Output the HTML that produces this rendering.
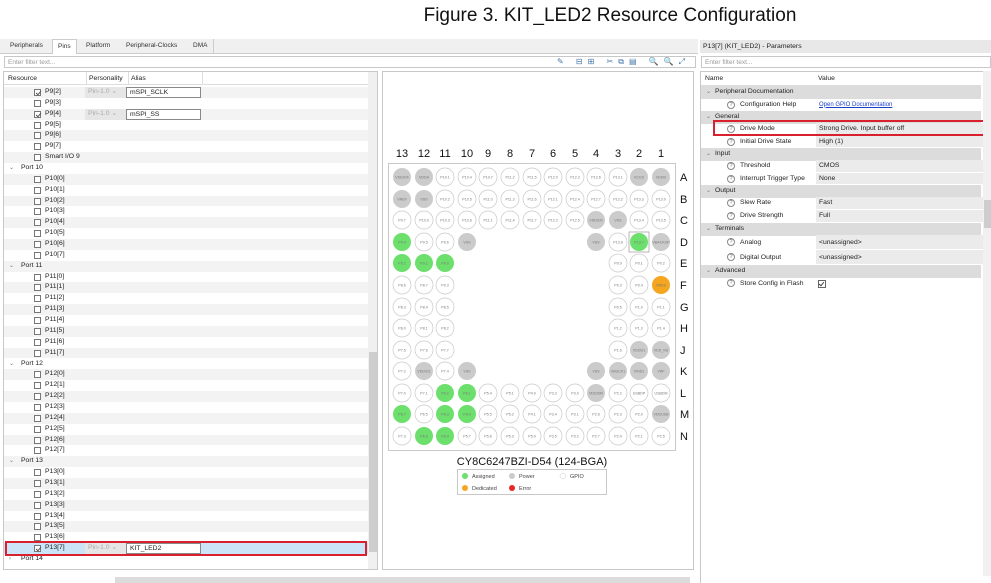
<!DOCTYPE html>
<html><head><meta charset="utf-8"><style>
*{margin:0;padding:0;box-sizing:border-box}
body{width:991px;height:583px;background:#fff;position:relative;overflow:hidden;font-family:"Liberation Sans",Arial,sans-serif;font-size:7px;color:#222}
.abs{position:absolute}
.title{left:0;width:1220px;top:5px;text-align:center;font-size:19px;color:#111}
.tabs{left:0;top:39px;width:698px;height:15px;background:#f0f0f0;border-bottom:1px solid #ccc}
.tab{position:absolute;top:3px;font-size:6.5px;color:#333}
.filter{height:12px;border:1px solid #c8c8c8;background:#fff;color:#999;font-size:6.5px;padding:1px 3px;line-height:9px}
.tree{left:3px;top:71px;width:375px;height:499px;border:1px solid #c8c8c8;background:#fff;overflow:hidden}
.row{position:absolute;left:0;width:365px;height:10.86px;line-height:10.86px;font-size:6.8px}
.row.s{background:#f3f3f3}
.cb{position:absolute;left:30px;top:2px;width:7px;height:7px;border:1px solid #777;background:#fff}
.cb.c::after{content:"";position:absolute;left:1.5px;top:0px;width:2px;height:4px;border:solid #555;border-width:0 1px 1px 0;transform:rotate(40deg)}
.lbl{position:absolute;left:41px}
.port{position:absolute;left:17px}
.chev{position:absolute;left:5px;font-size:6px;color:#777}
.pers{position:absolute;left:81px;width:41px;height:11px;background:#e6e6e6;color:#aaa;padding-left:3px}
.alias{position:absolute;left:122px;width:75px;height:11px;border:1px solid #888;background:#fff;padding-left:3px;line-height:9px}
.ball circle.w{fill:#fff;stroke:#c9c9c9;stroke-width:.7}
.ball circle.g{fill:#cbcbcb}
.ball circle.a{fill:#6ddf6d}
.ball circle.o{fill:#f5a51e}
.ball text{font-size:3.6px;fill:#777;text-anchor:middle;font-family:"Liberation Sans",sans-serif}
.ball text.cn{font-size:11px;fill:#111;text-anchor:middle}
.ball text.rl{font-size:11px;fill:#111;text-anchor:start}
.ball text.lg{font-size:5.5px;fill:#444;text-anchor:start}
.prow{position:absolute;left:0;width:280px;height:12.5px;line-height:12.5px;font-size:6.8px}
.cat{background:#dcdcdc}
.val{position:absolute;left:115px;width:170px;top:0;bottom:0;background:#ebebeb;padding-left:3px;border-bottom:1px solid #fff}
.q{position:absolute;left:26px;top:2px;width:8px;height:8px;border:1px solid #888;border-radius:50%;font-size:5.5px;line-height:6px;text-align:center;color:#666}
.pn{position:absolute;left:39px}
</style></head><body>
<div class="abs title">Figure 3. KIT_LED2 Resource Configuration</div>

<div class="abs tabs">
<span class="tab" style="left:10px">Peripherals</span>
<span class="tab" style="left:52px;top:0;height:15px;background:#fff;border:1px solid #ccc;border-bottom:none;padding:3px 5px 0">Pins</span>
<span class="tab" style="left:86px">Platform</span>
<span class="tab" style="left:126px">Peripheral-Clocks</span>
<span class="tab" style="left:193px">DMA</span>
<div class="abs" style="left:213px;top:0;width:1px;height:14px;background:#ccc"></div>
</div>
<div class="abs filter" style="left:4px;top:56px;width:692px">Enter filter text...</div>
<div class="abs" style="left:557px;top:57px;width:140px;height:10px;font-size:8px;color:#47a;letter-spacing:5px">✎ ⊟⊞ ✂⧉▤ 🔍🔍⤢</div>
<div class="abs tree">
<div class="row" style="top:0;height:13px;line-height:13px;border-bottom:1px solid #ddd;width:372px"><span style="position:absolute;left:4px">Resource</span><span style="position:absolute;left:82px;border-left:1px solid #ddd;padding-left:2px">Personality</span><span style="position:absolute;left:124px;border-left:1px solid #ddd;padding-left:2px;width:75px;border-right:1px solid #ddd">Alias</span></div>
<div class="row s" style="top:15px"><span class="cb c"></span><span class="lbl">P9[2]</span><span class="pers">Pin-1.0 ⌄</span><span class="alias">mSPI_SCLK</span></div>
<div class="row" style="top:25.86px"><span class="cb"></span><span class="lbl">P9[3]</span></div>
<div class="row s" style="top:36.72px"><span class="cb c"></span><span class="lbl">P9[4]</span><span class="pers">Pin-1.0 ⌄</span><span class="alias">mSPI_SS</span></div>
<div class="row" style="top:47.58px"><span class="cb"></span><span class="lbl">P9[5]</span></div>
<div class="row s" style="top:58.44px"><span class="cb"></span><span class="lbl">P9[6]</span></div>
<div class="row" style="top:69.3px"><span class="cb"></span><span class="lbl">P9[7]</span></div>
<div class="row s" style="top:80.16px"><span class="cb"></span><span class="lbl">Smart I/O 9</span></div>
<div class="row" style="top:91.02px"><span class="chev">⌄</span><span class="port">Port 10</span></div>
<div class="row s" style="top:101.88px"><span class="cb"></span><span class="lbl">P10[0]</span></div>
<div class="row" style="top:112.74px"><span class="cb"></span><span class="lbl">P10[1]</span></div>
<div class="row s" style="top:123.6px"><span class="cb"></span><span class="lbl">P10[2]</span></div>
<div class="row" style="top:134.46px"><span class="cb"></span><span class="lbl">P10[3]</span></div>
<div class="row s" style="top:145.32px"><span class="cb"></span><span class="lbl">P10[4]</span></div>
<div class="row" style="top:156.18px"><span class="cb"></span><span class="lbl">P10[5]</span></div>
<div class="row s" style="top:167.04px"><span class="cb"></span><span class="lbl">P10[6]</span></div>
<div class="row" style="top:177.9px"><span class="cb"></span><span class="lbl">P10[7]</span></div>
<div class="row s" style="top:188.76px"><span class="chev">⌄</span><span class="port">Port 11</span></div>
<div class="row" style="top:199.62px"><span class="cb"></span><span class="lbl">P11[0]</span></div>
<div class="row s" style="top:210.48px"><span class="cb"></span><span class="lbl">P11[1]</span></div>
<div class="row" style="top:221.34px"><span class="cb"></span><span class="lbl">P11[2]</span></div>
<div class="row s" style="top:232.2px"><span class="cb"></span><span class="lbl">P11[3]</span></div>
<div class="row" style="top:243.06px"><span class="cb"></span><span class="lbl">P11[4]</span></div>
<div class="row s" style="top:253.92px"><span class="cb"></span><span class="lbl">P11[5]</span></div>
<div class="row" style="top:264.78px"><span class="cb"></span><span class="lbl">P11[6]</span></div>
<div class="row s" style="top:275.64px"><span class="cb"></span><span class="lbl">P11[7]</span></div>
<div class="row" style="top:286.5px"><span class="chev">⌄</span><span class="port">Port 12</span></div>
<div class="row s" style="top:297.36px"><span class="cb"></span><span class="lbl">P12[0]</span></div>
<div class="row" style="top:308.22px"><span class="cb"></span><span class="lbl">P12[1]</span></div>
<div class="row s" style="top:319.08px"><span class="cb"></span><span class="lbl">P12[2]</span></div>
<div class="row" style="top:329.94px"><span class="cb"></span><span class="lbl">P12[3]</span></div>
<div class="row s" style="top:340.8px"><span class="cb"></span><span class="lbl">P12[4]</span></div>
<div class="row" style="top:351.66px"><span class="cb"></span><span class="lbl">P12[5]</span></div>
<div class="row s" style="top:362.52px"><span class="cb"></span><span class="lbl">P12[6]</span></div>
<div class="row" style="top:373.38px"><span class="cb"></span><span class="lbl">P12[7]</span></div>
<div class="row s" style="top:384.24px"><span class="chev">⌄</span><span class="port">Port 13</span></div>
<div class="row" style="top:395.1px"><span class="cb"></span><span class="lbl">P13[0]</span></div>
<div class="row s" style="top:405.96px"><span class="cb"></span><span class="lbl">P13[1]</span></div>
<div class="row" style="top:416.82px"><span class="cb"></span><span class="lbl">P13[2]</span></div>
<div class="row s" style="top:427.68px"><span class="cb"></span><span class="lbl">P13[3]</span></div>
<div class="row" style="top:438.54px"><span class="cb"></span><span class="lbl">P13[4]</span></div>
<div class="row s" style="top:449.4px"><span class="cb"></span><span class="lbl">P13[5]</span></div>
<div class="row" style="top:460.26px"><span class="cb"></span><span class="lbl">P13[6]</span></div>
<div class="row" style="top:471.12px;background:#cce4f7"><span class="cb c"></span><span class="lbl">P13[7]</span><span class="pers">Pin-1.0 ⌄</span><span class="alias">KIT_LED2</span></div>
<div class="row" style="top:481.98px"><span class="chev">›</span><span class="port">Port 14</span></div>
<div class="abs" style="left:1px;top:469px;width:362px;height:15px;border:2px solid #d9202e"></div>
<div class="abs" style="left:364px;top:0;width:10px;height:499px;background:#f0f0f0"></div>
<div class="abs" style="left:365px;top:280px;width:8px;height:200px;background:#cdcdcd"></div>
</div>
<div class="abs" style="left:115px;top:577px;width:575px;height:6px;background:#dcdcdc"></div>

<div class="abs" style="left:382px;top:71px;width:312px;height:499px;border:1px solid #c8c8c8;background:#fff"></div>
<div class="abs" style="left:388px;top:163px;width:288px;height:288px;border:1px solid #c8c8c8"></div>
<svg class="abs ball" style="left:0;top:0" width="991" height="583">
<g>
<text class="cn" x="402" y="157">13</text><text class="cn" x="424" y="157">12</text><text class="cn" x="445" y="157">11</text><text class="cn" x="467" y="157">10</text><text class="cn" x="488" y="157">9</text><text class="cn" x="510" y="157">8</text><text class="cn" x="532" y="157">7</text><text class="cn" x="553" y="157">6</text><text class="cn" x="575" y="157">5</text><text class="cn" x="596" y="157">4</text><text class="cn" x="618" y="157">3</text><text class="cn" x="639" y="157">2</text><text class="cn" x="661" y="157">1</text>
<text class="rl" x="680" y="181">A</text><text class="rl" x="680" y="203">B</text><text class="rl" x="680" y="224">C</text><text class="rl" x="680" y="246">D</text><text class="rl" x="680" y="267">E</text><text class="rl" x="680" y="289">F</text><text class="rl" x="680" y="311">G</text><text class="rl" x="680" y="332">H</text><text class="rl" x="680" y="354">J</text><text class="rl" x="680" y="375">K</text><text class="rl" x="680" y="397">L</text><text class="rl" x="680" y="418">M</text><text class="rl" x="680" y="440">N</text>
</g>
<circle class="g" cx="402" cy="177" r="9"/><text x="402" y="178.3">VDDIO4</text>
<circle class="g" cx="424" cy="177" r="9"/><text x="424" y="178.3">VDDA</text>
<circle class="w" cx="445" cy="177" r="9"/><text x="445" y="178.3">P10.1</text>
<circle class="w" cx="467" cy="177" r="9"/><text x="467" y="178.3">P10.4</text>
<circle class="w" cx="488" cy="177" r="9"/><text x="488" y="178.3">P10.7</text>
<circle class="w" cx="510" cy="177" r="9"/><text x="510" y="178.3">P11.2</text>
<circle class="w" cx="532" cy="177" r="9"/><text x="532" y="178.3">P11.5</text>
<circle class="w" cx="553" cy="177" r="9"/><text x="553" y="178.3">P12.0</text>
<circle class="w" cx="575" cy="177" r="9"/><text x="575" y="178.3">P12.3</text>
<circle class="w" cx="596" cy="177" r="9"/><text x="596" y="178.3">P12.6</text>
<circle class="w" cx="618" cy="177" r="9"/><text x="618" y="178.3">P13.1</text>
<circle class="g" cx="639" cy="177" r="9"/><text x="639" y="178.3">VCCD</text>
<circle class="g" cx="661" cy="177" r="9"/><text x="661" y="178.3">VDDD</text>
<circle class="g" cx="402" cy="199" r="9"/><text x="402" y="200.3">VREF</text>
<circle class="g" cx="424" cy="199" r="9"/><text x="424" y="200.3">VSS</text>
<circle class="w" cx="445" cy="199" r="9"/><text x="445" y="200.3">P10.2</text>
<circle class="w" cx="467" cy="199" r="9"/><text x="467" y="200.3">P10.5</text>
<circle class="w" cx="488" cy="199" r="9"/><text x="488" y="200.3">P11.0</text>
<circle class="w" cx="510" cy="199" r="9"/><text x="510" y="200.3">P11.3</text>
<circle class="w" cx="532" cy="199" r="9"/><text x="532" y="200.3">P11.6</text>
<circle class="w" cx="553" cy="199" r="9"/><text x="553" y="200.3">P12.1</text>
<circle class="w" cx="575" cy="199" r="9"/><text x="575" y="200.3">P12.4</text>
<circle class="w" cx="596" cy="199" r="9"/><text x="596" y="200.3">P12.7</text>
<circle class="w" cx="618" cy="199" r="9"/><text x="618" y="200.3">P13.2</text>
<circle class="w" cx="639" cy="199" r="9"/><text x="639" y="200.3">P13.3</text>
<circle class="w" cx="661" cy="199" r="9"/><text x="661" y="200.3">P13.0</text>
<circle class="w" cx="402" cy="220" r="9"/><text x="402" y="221.3">P9.7</text>
<circle class="w" cx="424" cy="220" r="9"/><text x="424" y="221.3">P10.0</text>
<circle class="w" cx="445" cy="220" r="9"/><text x="445" y="221.3">P10.3</text>
<circle class="w" cx="467" cy="220" r="9"/><text x="467" y="221.3">P10.6</text>
<circle class="w" cx="488" cy="220" r="9"/><text x="488" y="221.3">P11.1</text>
<circle class="w" cx="510" cy="220" r="9"/><text x="510" y="221.3">P11.4</text>
<circle class="w" cx="532" cy="220" r="9"/><text x="532" y="221.3">P11.7</text>
<circle class="w" cx="553" cy="220" r="9"/><text x="553" y="221.3">P12.2</text>
<circle class="w" cx="575" cy="220" r="9"/><text x="575" y="221.3">P12.5</text>
<circle class="g" cx="596" cy="220" r="9"/><text x="596" y="221.3">VDDIO0</text>
<circle class="g" cx="618" cy="220" r="9"/><text x="618" y="221.3">VSS</text>
<circle class="w" cx="639" cy="220" r="9"/><text x="639" y="221.3">P13.4</text>
<circle class="w" cx="661" cy="220" r="9"/><text x="661" y="221.3">P13.5</text>
<circle class="a" cx="402" cy="242" r="9"/><text x="402" y="243.3">P9.4</text>
<circle class="w" cx="424" cy="242" r="9"/><text x="424" y="243.3">P9.5</text>
<circle class="w" cx="445" cy="242" r="9"/><text x="445" y="243.3">P9.6</text>
<circle class="g" cx="467" cy="242" r="9"/><text x="467" y="243.3">VSS</text>
<circle class="g" cx="596" cy="242" r="9"/><text x="596" y="243.3">VSS</text>
<circle class="w" cx="618" cy="242" r="9"/><text x="618" y="243.3">P13.6</text>
<rect x="629" y="232" width="20" height="20" fill="none" stroke="#999" stroke-width=".7"/>
<circle class="a" cx="639" cy="242" r="9"/><text x="639" y="243.3">P13.7</text>
<circle class="g" cx="661" cy="242" r="9"/><text x="661" y="243.3">VBACKUP</text>
<circle class="a" cx="402" cy="263" r="9"/><text x="402" y="264.3">P9.2</text>
<circle class="a" cx="424" cy="263" r="9"/><text x="424" y="264.3">P9.1</text>
<circle class="a" cx="445" cy="263" r="9"/><text x="445" y="264.3">P9.0</text>
<circle class="w" cx="618" cy="263" r="9"/><text x="618" y="264.3">P0.0</text>
<circle class="w" cx="639" cy="263" r="9"/><text x="639" y="264.3">P0.1</text>
<circle class="w" cx="661" cy="263" r="9"/><text x="661" y="264.3">P0.2</text>
<circle class="w" cx="402" cy="285" r="9"/><text x="402" y="286.3">P8.6</text>
<circle class="w" cx="424" cy="285" r="9"/><text x="424" y="286.3">P8.7</text>
<circle class="w" cx="445" cy="285" r="9"/><text x="445" y="286.3">P9.3</text>
<circle class="w" cx="618" cy="285" r="9"/><text x="618" y="286.3">P0.3</text>
<circle class="w" cx="639" cy="285" r="9"/><text x="639" y="286.3">P0.4</text>
<circle class="o" cx="661" cy="285" r="9"/><text x="661" y="286.3">XRES</text>
<circle class="w" cx="402" cy="307" r="9"/><text x="402" y="308.3">P8.3</text>
<circle class="w" cx="424" cy="307" r="9"/><text x="424" y="308.3">P8.4</text>
<circle class="w" cx="445" cy="307" r="9"/><text x="445" y="308.3">P8.5</text>
<circle class="w" cx="618" cy="307" r="9"/><text x="618" y="308.3">P0.5</text>
<circle class="w" cx="639" cy="307" r="9"/><text x="639" y="308.3">P1.0</text>
<circle class="w" cx="661" cy="307" r="9"/><text x="661" y="308.3">P1.1</text>
<circle class="w" cx="402" cy="328" r="9"/><text x="402" y="329.3">P8.0</text>
<circle class="w" cx="424" cy="328" r="9"/><text x="424" y="329.3">P8.1</text>
<circle class="w" cx="445" cy="328" r="9"/><text x="445" y="329.3">P8.2</text>
<circle class="w" cx="618" cy="328" r="9"/><text x="618" y="329.3">P1.2</text>
<circle class="w" cx="639" cy="328" r="9"/><text x="639" y="329.3">P1.3</text>
<circle class="w" cx="661" cy="328" r="9"/><text x="661" y="329.3">P1.4</text>
<circle class="w" cx="402" cy="350" r="9"/><text x="402" y="351.3">P7.5</text>
<circle class="w" cx="424" cy="350" r="9"/><text x="424" y="351.3">P7.6</text>
<circle class="w" cx="445" cy="350" r="9"/><text x="445" y="351.3">P7.7</text>
<circle class="w" cx="618" cy="350" r="9"/><text x="618" y="351.3">P1.5</text>
<circle class="g" cx="639" cy="350" r="9"/><text x="639" y="351.3">VDDD1</text>
<circle class="g" cx="661" cy="350" r="9"/><text x="661" y="351.3">VDD_NS</text>
<circle class="w" cx="402" cy="371" r="9"/><text x="402" y="372.3">P7.2</text>
<circle class="g" cx="424" cy="371" r="9"/><text x="424" y="372.3">VDDIO1</text>
<circle class="w" cx="445" cy="371" r="9"/><text x="445" y="372.3">P7.4</text>
<circle class="g" cx="467" cy="371" r="9"/><text x="467" y="372.3">VSS</text>
<circle class="g" cx="596" cy="371" r="9"/><text x="596" y="372.3">VSS</text>
<circle class="g" cx="618" cy="371" r="9"/><text x="618" y="372.3">VBUCK1</text>
<circle class="g" cx="639" cy="371" r="9"/><text x="639" y="372.3">VIND1</text>
<circle class="g" cx="661" cy="371" r="9"/><text x="661" y="372.3">VRF</text>
<circle class="w" cx="402" cy="393" r="9"/><text x="402" y="394.3">P7.0</text>
<circle class="w" cx="424" cy="393" r="9"/><text x="424" y="394.3">P7.1</text>
<circle class="a" cx="445" cy="393" r="9"/><text x="445" y="394.3">P6.2</text>
<circle class="a" cx="467" cy="393" r="9"/><text x="467" y="394.3">P6.1</text>
<circle class="w" cx="488" cy="393" r="9"/><text x="488" y="394.3">P5.4</text>
<circle class="w" cx="510" cy="393" r="9"/><text x="510" y="394.3">P5.1</text>
<circle class="w" cx="532" cy="393" r="9"/><text x="532" y="394.3">P4.0</text>
<circle class="w" cx="553" cy="393" r="9"/><text x="553" y="394.3">P3.3</text>
<circle class="w" cx="575" cy="393" r="9"/><text x="575" y="394.3">P3.0</text>
<circle class="g" cx="596" cy="393" r="9"/><text x="596" y="394.3">VDDIOR</text>
<circle class="w" cx="618" cy="393" r="9"/><text x="618" y="394.3">P2.2</text>
<circle class="w" cx="639" cy="393" r="9"/><text x="639" y="394.3">USBDP</text>
<circle class="w" cx="661" cy="393" r="9"/><text x="661" y="394.3">USBDM</text>
<circle class="a" cx="402" cy="414" r="9"/><text x="402" y="415.3">P6.7</text>
<circle class="w" cx="424" cy="414" r="9"/><text x="424" y="415.3">P6.5</text>
<circle class="a" cx="445" cy="414" r="9"/><text x="445" y="415.3">P6.3</text>
<circle class="a" cx="467" cy="414" r="9"/><text x="467" y="415.3">P6.0</text>
<circle class="w" cx="488" cy="414" r="9"/><text x="488" y="415.3">P5.5</text>
<circle class="w" cx="510" cy="414" r="9"/><text x="510" y="415.3">P5.2</text>
<circle class="w" cx="532" cy="414" r="9"/><text x="532" y="415.3">P4.1</text>
<circle class="w" cx="553" cy="414" r="9"/><text x="553" y="415.3">P3.4</text>
<circle class="w" cx="575" cy="414" r="9"/><text x="575" y="415.3">P3.1</text>
<circle class="w" cx="596" cy="414" r="9"/><text x="596" y="415.3">P2.6</text>
<circle class="w" cx="618" cy="414" r="9"/><text x="618" y="415.3">P2.3</text>
<circle class="w" cx="639" cy="414" r="9"/><text x="639" y="415.3">P2.0</text>
<circle class="g" cx="661" cy="414" r="9"/><text x="661" y="415.3">VDDUSB</text>
<circle class="w" cx="402" cy="436" r="9"/><text x="402" y="437.3">P7.3</text>
<circle class="a" cx="424" cy="436" r="9"/><text x="424" y="437.3">P6.6</text>
<circle class="a" cx="445" cy="436" r="9"/><text x="445" y="437.3">P6.4</text>
<circle class="w" cx="467" cy="436" r="9"/><text x="467" y="437.3">P5.7</text>
<circle class="w" cx="488" cy="436" r="9"/><text x="488" y="437.3">P5.6</text>
<circle class="w" cx="510" cy="436" r="9"/><text x="510" y="437.3">P5.3</text>
<circle class="w" cx="532" cy="436" r="9"/><text x="532" y="437.3">P5.0</text>
<circle class="w" cx="553" cy="436" r="9"/><text x="553" y="437.3">P3.5</text>
<circle class="w" cx="575" cy="436" r="9"/><text x="575" y="437.3">P3.2</text>
<circle class="w" cx="596" cy="436" r="9"/><text x="596" y="437.3">P2.7</text>
<circle class="w" cx="618" cy="436" r="9"/><text x="618" y="437.3">P2.4</text>
<circle class="w" cx="639" cy="436" r="9"/><text x="639" y="437.3">P2.1</text>
<circle class="w" cx="661" cy="436" r="9"/><text x="661" y="437.3">P2.5</text>
<text class="cn" x="532" y="465">CY8C6247BZI-D54 (124-BGA)</text>
<rect x="457.5" y="469.5" width="149" height="25" fill="#fff" stroke="#bbb" stroke-width=".8"/>
<circle cx="465" cy="476" r="3" fill="#6ddf6d"/><text class="lg" x="472" y="478">Assigned</text>
<circle cx="512" cy="476" r="3" fill="#cbcbcb"/><text class="lg" x="519" y="478">Power</text>
<circle cx="563" cy="476" r="3" fill="#fff" stroke="#ccc" stroke-width=".5"/><text class="lg" x="570" y="478">GPIO</text>
<circle cx="465" cy="488" r="3" fill="#f5a51e"/><text class="lg" x="472" y="490">Dedicated</text>
<circle cx="512" cy="488" r="3" fill="#e82828"/><text class="lg" x="519" y="490">Error</text>
</svg>

<div class="abs" style="left:700px;top:40px;width:291px;height:13px;background:#e8e8e8;font-size:6.8px;line-height:13px;padding-left:3px">P13[7] (KIT_LED2) - Parameters</div>
<div class="abs filter" style="left:701px;top:56px;width:290px">Enter filter text...</div>
<div class="abs" style="left:700px;top:71px;width:291px;height:512px;border-left:1px solid #c8c8c8;border-top:1px solid #c8c8c8">
<div class="prow" style="top:0;height:14px;line-height:14px;border-bottom:1px solid #ddd"><span style="position:absolute;left:4px">Name</span><span style="position:absolute;left:117px">Value</span></div>
<div class="prow cat" style="top:14px"><span class="chev">⌄</span><span style="position:absolute;left:14px">Peripheral Documentation</span></div>
<div class="prow" style="top:26.5px"><span class="q">?</span><span class="pn">Configuration Help</span><span class="val" style="background:#fff;color:#1a3fc7;text-decoration:underline;font-size:6px">Open GPIO Documentation</span></div>
<div class="prow cat" style="top:39px"><span class="chev">⌄</span><span style="position:absolute;left:14px">General</span></div>
<div class="prow" style="top:51px"><span class="q">?</span><span class="pn">Drive Mode</span><span class="val">Strong Drive. Input buffer off</span></div>
<div class="prow" style="top:63.5px"><span class="q">?</span><span class="pn">Initial Drive State</span><span class="val">High (1)</span></div>
<div class="prow cat" style="top:76px"><span class="chev">⌄</span><span style="position:absolute;left:14px">Input</span></div>
<div class="prow" style="top:88px"><span class="q">?</span><span class="pn">Threshold</span><span class="val">CMOS</span></div>
<div class="prow" style="top:100.5px"><span class="q">?</span><span class="pn">Interrupt Trigger Type</span><span class="val">None</span></div>
<div class="prow cat" style="top:113px"><span class="chev">⌄</span><span style="position:absolute;left:14px">Output</span></div>
<div class="prow" style="top:125px;height:13px"><span class="q">?</span><span class="pn">Slew Rate</span><span class="val">Fast</span></div>
<div class="prow" style="top:138px;height:13px"><span class="q">?</span><span class="pn">Drive Strength</span><span class="val">Full</span></div>
<div class="prow cat" style="top:151px"><span class="chev">⌄</span><span style="position:absolute;left:14px">Terminals</span></div>
<div class="prow" style="top:163px;height:15px;line-height:15px"><span class="q" style="top:3px">?</span><span class="pn">Analog</span><span class="val">&lt;unassigned&gt;</span></div>
<div class="prow" style="top:178px;height:15px;line-height:15px"><span class="q" style="top:3px">?</span><span class="pn">Digital Output</span><span class="val">&lt;unassigned&gt;</span></div>
<div class="prow cat" style="top:193px"><span class="chev">⌄</span><span style="position:absolute;left:14px">Advanced</span></div>
<div class="prow" style="top:205px;height:14px;line-height:14px"><span class="q">?</span><span class="pn">Store Config in Flash</span><span style="position:absolute;left:117px;top:3px;width:8px;height:8px;border:1px solid #666"></span><span style="position:absolute;left:119px;top:4px;width:3px;height:5px;border:solid #444;border-width:0 1px 1px 0;transform:rotate(40deg)"></span></div>
<div class="abs" style="left:12px;top:48px;width:280px;height:16px;border:2px solid #d9202e;border-right:none"></div>
</div>
<div class="abs" style="left:983px;top:71px;width:8px;height:505px;background:#f0f0f0"></div>
<div class="abs" style="left:984px;top:200px;width:7px;height:28px;background:#cdcdcd"></div>
</body></html>
